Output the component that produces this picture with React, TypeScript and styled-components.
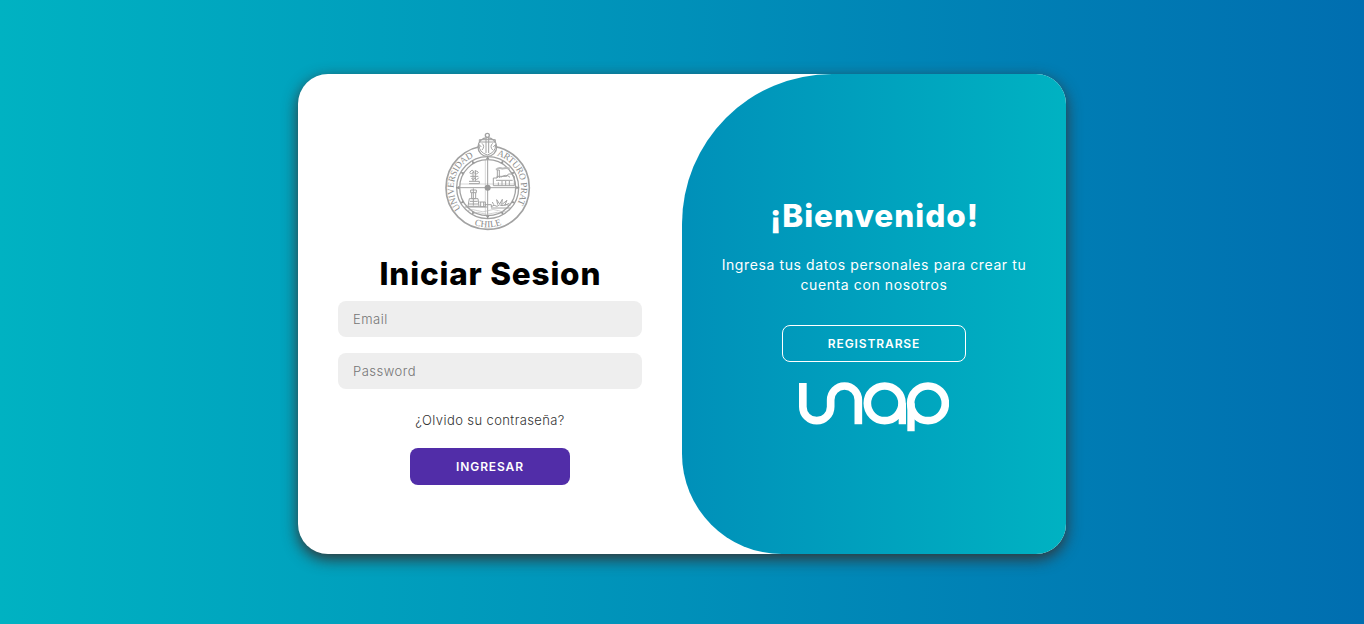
import React from "react";
import styled, { createGlobalStyle } from "styled-components";

const GlobalStyle = createGlobalStyle`
  * { margin: 0; padding: 0; box-sizing: border-box; }
  body { font-family: Inter, "Open Sans", sans-serif; }
`;

const Page = styled.main`
  display: flex;
  align-items: center;
  justify-content: center;
  height: 100vh;
  padding-top: 4px;
  background: linear-gradient(to right, #00b2c2, #006eb0);
`;

const Card = styled.section`
  display: flex;
  width: 768px;
  height: 480px;
  border-radius: 30px;
  background: #fff;
  overflow: hidden;
  box-shadow: 0 5px 15px #333;
`;

const LoginForm = styled.form`
  width: 50%;
  display: flex;
  flex-direction: column;
  align-items: center;
  padding: 51px 40px 0;
`;

const Title = styled.h1<{ $spacing: number }>`
  font-size: 31.5px;
  line-height: 40px;
  font-weight: 800;
  letter-spacing: ${(p) => p.$spacing}px;
  margin-right: ${(p) => -p.$spacing}px;
  white-space: nowrap;
`;

const LoginTitle = styled(Title)`
  margin-top: 19px;
  margin-bottom: 7px;
`;

const Field = styled.input`
  width: 100%;
  height: 36px;
  flex: none;
  margin-bottom: 16px;
  padding: 0 15px;
  border: 0;
  outline: 0;
  border-radius: 8px;
  background: #eee;
  font: 300 13px Inter, sans-serif;
  letter-spacing: 0.5px;
  &::placeholder { color: #757575; }
`;

const ForgotLink = styled.a`
  margin-top: 6px;
  color: #333;
  font-size: 13px;
  font-weight: 300;
  line-height: 18px;
  letter-spacing: 0.4px;
  text-decoration: none;
`;

const Button = styled.button<{ $outline?: boolean }>`
  width: ${(p) => (p.$outline ? 184 : 160)}px;
  height: 37px;
  flex: none;
  border: 1px solid ${(p) => (p.$outline ? "#fff" : "transparent")};
  border-radius: 8px;
  background: ${(p) => (p.$outline ? "transparent" : "#512da8")};
  color: #fff;
  font: 600 12px Inter, sans-serif;
  letter-spacing: 0.9px;
`;

const SubmitButton = styled(Button)`
  margin-top: 19px;
`;

const Welcome = styled.aside`
  width: 50%;
  display: flex;
  flex-direction: column;
  align-items: center;
  padding-top: 122px;
  border-radius: 150px 0 0 100px;
  color: #fff;
  text-align: center;
  background: linear-gradient(to right, #0090b9, #00b2c2);
`;

const Message = styled.p`
  width: 324px;
  margin: 19px 0 30px;
  font-size: 14px;
  line-height: 20px;
  letter-spacing: 0.6px;
`;

const Wordmark = styled.svg`
  display: block;
  margin-top: 20px;
`;

const SealText = styled.text`
  font-family: "Liberation Serif", serif;
  font-size: 28px;
  fill: #8c8c8c;
`;

const Seal = () => (
  <svg width="110" height="110" viewBox="0 0 330 330" fill="none" stroke="#a2a2a2" strokeWidth="3">
    <defs>
      <path id="sealLeft" d="M78 251 A101 101 0 0 1 134 90" />
      <path id="sealRight" d="M185 91 A101 101 0 0 1 238 249" />
      <path id="sealBottom" d="M96 289 A117 117 0 0 0 220 289" />
    </defs>
    <circle cx="158" cy="188" r="125" strokeWidth="5" />
    <circle cx="158" cy="188" r="93" strokeWidth="4" />
    <circle cx="158" cy="188" r="84" strokeWidth="4" />
    <path d="M66 188H250M158 96V278" strokeWidth="3" />
    <path d="M74 177H242M151 104V272" strokeWidth="1.3" />
    <circle cx="158" cy="188" r="9" fill="#999" stroke="none" />
    <g fill="#999" stroke="none">
      <path d="M158 92l5 10h-10zM158 282l5-10h-10zM62 188l10-5v10zM254 188l-10-5v10z" />
      {[30, 60, 120, 150, 210, 240, 300, 330].map((a) => (
        <path key={a} d="M158 94l5 10h-10z" transform={`rotate(${a} 158 188)`} />
      ))}
    </g>
    <circle cx="157" cy="66" r="28" fill="#fff" strokeWidth="4" />
    <circle cx="157" cy="31" r="6" fill="#fff" strokeWidth="4" />
    <path d="M133 44H181V51H133ZM153 38V84M161 38V84" />
    <path d="M132 60Q132 82 157 90Q182 82 182 60M132 58l-3 11M132 58l7 8M182 58l3 11M182 58l-7 8M141 55q10 9 0 20M173 55q-10 9 0 20" />
    <path d="M105 141q7-10 12 0q-8 9-14 2M119 143q7-9 11-1q-5 9-11 3M106 154h24M109 160q7 8 11-2q4 11 11 0M114 140v28M121 135v34M102 169h31v7h-31" />
    <path d="M175 159v23h63v-28l-9-7h-9l-5 7h-29v5zM187 159v-24h6v24M197 157q17-12 28 0M183 166h50M190 172v10M201 168v14M212 168v14M223 168v14" />
    <path d="M183 134q10-8 19-3q12-4 22 0" strokeWidth="6" stroke="#bbb" />
    <path d="M107 195h17v8h-17zM110 204v17h12v-17M103 221h26l3 23H99zM105 229h23M102 237h29M115 190v52" />
    <path d="M89 246h68M133 231h18v14h-18M137 231v14M146 231v14M149 239h20v8" />
    <path d="M169 245q8-8 17-1q7-8 15-2q13-6 25 0M176 239l-4-8M188 239l-3-15 9 13 8-14-2 16 16-13-7 15 14-6M168 249h59" />
    <path d="M96 257q16-7 32 0t31 0t32 0t27 0M115 265q13-6 26 0t31 0t24-1" strokeWidth="2" stroke="#bbb" />
    <g stroke="none">
      <SealText><textPath href="#sealLeft" textLength="184">UNIVERSIDAD</textPath></SealText>
      <SealText><textPath href="#sealRight" textLength="181">ARTURO PRAT</textPath></SealText>
      <SealText><textPath href="#sealBottom" startOffset="24" textLength="84">CHILE</textPath></SealText>
    </g>
  </svg>
);

const UnapLogo = () => (
  <Wordmark width="150" height="50" viewBox="87 200 450 150" fill="none" stroke="#fff" strokeWidth="23">
    <path d="M98.500 203V274A41.700 42 0 0 0 182 274V254A41.500 42 0 0 1 265 254V327" />
    <circle cx="344" cy="264" r="52" />
    <path d="M397 264V327M423 264V348" strokeWidth="22" />
    <circle cx="474" cy="264" r="52" />
  </Wordmark>
);

export default function App() {
  return (
    <>
      <GlobalStyle />
      <Page>
        <Card>
          <LoginForm>
            <Seal />
            <LoginTitle $spacing={0.8}>Iniciar Sesion</LoginTitle>
            <Field type="email" placeholder="Email" />
            <Field type="password" placeholder="Password" />
            <ForgotLink>¿Olvido su contraseña?</ForgotLink>
            <SubmitButton type="button">INGRESAR</SubmitButton>
          </LoginForm>
          <Welcome>
            <Title as="h2" $spacing={1}>¡Bienvenido!</Title>
            <Message>Ingresa tus datos personales para crear tu cuenta con nosotros</Message>
            <Button type="button" $outline>REGISTRARSE</Button>
            <UnapLogo />
          </Welcome>
        </Card>
      </Page>
    </>
  );
}
